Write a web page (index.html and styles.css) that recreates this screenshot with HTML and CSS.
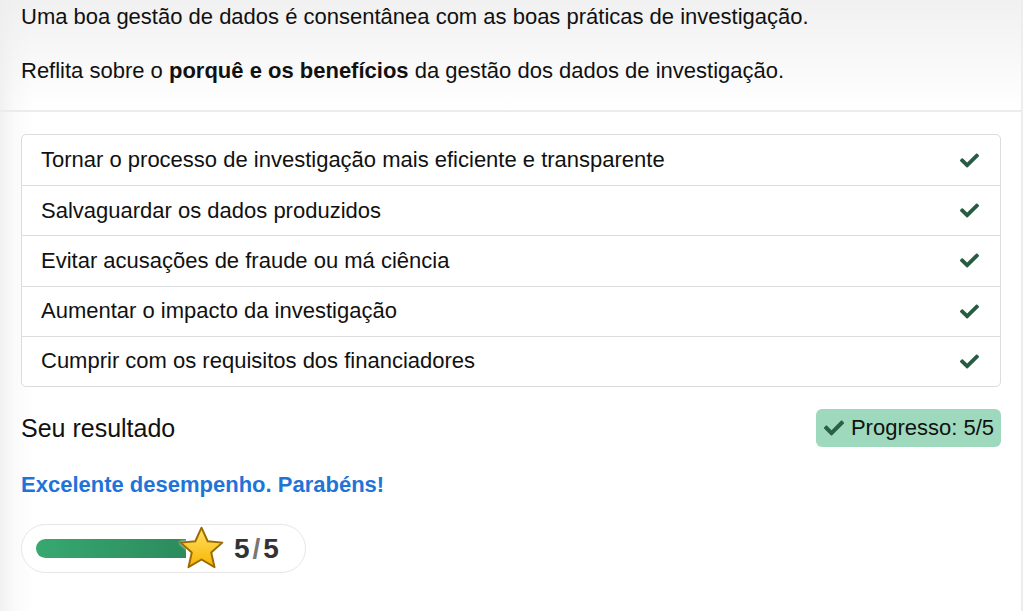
FILE: index.html
```html
<!DOCTYPE html>
<html lang="pt">
<head>
<meta charset="utf-8">
<title>Gestão de dados</title>
<link rel="stylesheet" href="styles.css">
</head>
<body>
<div class="frame">
  <header class="intro">
    <p>Uma boa gestão de dados é consentânea com as boas práticas de investigação.</p>
    <p>Reflita sobre o <strong>porquê e os benefícios</strong> da gestão dos dados de investigação.</p>
  </header>
  <main class="content">
    <ul class="answers">
      <li><span>Tornar o processo de investigação mais eficiente e transparente</span><svg class="check" viewBox="0 0 512 512"><path d="M173.898 439.404l-166.4-166.4c-9.997-9.997-9.997-26.206 0-36.204l36.203-36.204c9.997-9.998 26.207-9.998 36.204 0L192 312.69 432.095 72.596c9.997-9.997 26.207-9.997 36.204 0l36.203 36.204c9.997 9.997 9.997 26.206 0 36.204l-294.4 294.401c-9.998 9.997-26.207 9.997-36.204-.001z"/></svg></li>
      <li><span>Salvaguardar os dados produzidos</span><svg class="check" viewBox="0 0 512 512"><path d="M173.898 439.404l-166.4-166.4c-9.997-9.997-9.997-26.206 0-36.204l36.203-36.204c9.997-9.998 26.207-9.998 36.204 0L192 312.69 432.095 72.596c9.997-9.997 26.207-9.997 36.204 0l36.203 36.204c9.997 9.997 9.997 26.206 0 36.204l-294.4 294.401c-9.998 9.997-26.207 9.997-36.204-.001z"/></svg></li>
      <li><span>Evitar acusações de fraude ou má ciência</span><svg class="check" viewBox="0 0 512 512"><path d="M173.898 439.404l-166.4-166.4c-9.997-9.997-9.997-26.206 0-36.204l36.203-36.204c9.997-9.998 26.207-9.998 36.204 0L192 312.69 432.095 72.596c9.997-9.997 26.207-9.997 36.204 0l36.203 36.204c9.997 9.997 9.997 26.206 0 36.204l-294.4 294.401c-9.998 9.997-26.207 9.997-36.204-.001z"/></svg></li>
      <li><span>Aumentar o impacto da investigação</span><svg class="check" viewBox="0 0 512 512"><path d="M173.898 439.404l-166.4-166.4c-9.997-9.997-9.997-26.206 0-36.204l36.203-36.204c9.997-9.998 26.207-9.998 36.204 0L192 312.69 432.095 72.596c9.997-9.997 26.207-9.997 36.204 0l36.203 36.204c9.997 9.997 9.997 26.206 0 36.204l-294.4 294.401c-9.998 9.997-26.207 9.997-36.204-.001z"/></svg></li>
      <li><span>Cumprir com os requisitos dos financiadores</span><svg class="check" viewBox="0 0 512 512"><path d="M173.898 439.404l-166.4-166.4c-9.997-9.997-9.997-26.206 0-36.204l36.203-36.204c9.997-9.998 26.207-9.998 36.204 0L192 312.69 432.095 72.596c9.997-9.997 26.207-9.997 36.204 0l36.203 36.204c9.997 9.997 9.997 26.206 0 36.204l-294.4 294.401c-9.998 9.997-26.207 9.997-36.204-.001z"/></svg></li>
    </ul>
    <div class="result-head">
      <h2>Seu resultado</h2>
      <div class="badge"><svg class="check" viewBox="0 0 512 512"><path d="M173.898 439.404l-166.4-166.4c-9.997-9.997-9.997-26.206 0-36.204l36.203-36.204c9.997-9.998 26.207-9.998 36.204 0L192 312.69 432.095 72.596c9.997-9.997 26.207-9.997 36.204 0l36.203 36.204c9.997 9.997 9.997 26.206 0 36.204l-294.4 294.401c-9.998 9.997-26.207 9.997-36.204-.001z"/></svg><span>Progresso: 5/5</span></div>
    </div>
    <p class="feedback">Excelente desempenho. Parabéns!</p>
    <div class="score">
      <div class="track">
        <div class="fill"></div>
        <svg class="star" viewBox="0 0 44 44">
          <defs>
            <linearGradient id="sg" x1="0" y1="0" x2="0" y2="1">
              <stop offset="0" stop-color="#ffe066"/>
              <stop offset="1" stop-color="#f7b500"/>
            </linearGradient>
          </defs>
          <polygon points="22,2.5 27.8,15.2 41.5,16.5 31.1,25.7 34.2,39.5 22,32.3 9.8,39.5 12.9,25.7 2.5,16.5 16.2,15.2" fill="url(#sg)" stroke="#9a6a00" stroke-width="1.8" stroke-linejoin="round"/>
        </svg>
      </div>
      <span class="count">5<span class="slash">/</span>5</span>
    </div>
  </main>
</div>
</body>
</html>
```
FILE: styles.css
```css
html, body {
  margin: 0;
  padding: 0;
  background: #fff;
}
body {
  font-family: "Liberation Sans", Arial, sans-serif;
  color: #111;
}
.frame {
  width: 1023px;
  height: 611px;
  box-sizing: border-box;
  border-right: 2px solid #ededed;
  background: linear-gradient(to right, #f1f1f1 0px, #fafafa 14px, #ffffff 34px);
}
.intro {
  padding: 2px 21px 24px;
  border-bottom: 2px solid #ececec;
  background: linear-gradient(to bottom, rgba(238,238,238,0.85) 0%, rgba(255,255,255,0) 100%);
}
.intro p {
  margin: 0 0 24px;
  font-size: 22px;
  line-height: 30px;
}
.intro p:last-child {
  margin-bottom: 0;
}
.intro strong {
  font-weight: 700;
}
.content {
  padding: 22px 21px 0;
}
.answers {
  list-style: none;
  margin: 0;
  padding: 0;
  width: 980px;
  box-sizing: border-box;
  border: 1px solid #dcdcdc;
  border-radius: 5px;
  background: #fff;
}
.answers li {
  display: flex;
  align-items: center;
  justify-content: space-between;
  height: 49.25px;
  padding: 0 21px 0 19px;
  font-size: 22px;
  border-top: 1px solid #dcdcdc;
}
.answers li:first-child {
  border-top: none;
  height: 50px;
}
.check {
  width: 19px;
  height: 19px;
  fill: #275c43;
}
.result-head {
  display: flex;
  align-items: center;
  justify-content: space-between;
  width: 980px;
  margin-top: 22px;
}
.result-head h2 {
  margin: 0;
  font-size: 25px;
  font-weight: 400;
  color: #111;
}
.badge {
  display: flex;
  align-items: center;
  gap: 7px;
  height: 38px;
  padding: 0 7px 0 8px;
  border-radius: 6px;
  background: #9fd9bd;
  font-size: 22px;
  color: #111;
}
.badge .check {
  width: 20px;
  height: 20px;
  fill: #2a6048;
}
.feedback {
  margin: 25px 0 0;
  font-size: 22px;
  font-weight: 700;
  color: #1f74d8;
}
.score {
  display: inline-flex;
  align-items: center;
  gap: 9px;
  margin-top: 26px;
  height: 49px;
  box-sizing: border-box;
  padding: 0 26px 0 14px;
  border: 1px solid #e6e6e6;
  border-radius: 25px;
  background: #fff;
}
.track {
  display: flex;
  align-items: center;
}
.fill {
  width: 150px;
  height: 19px;
  border-radius: 10px 0 0 10px;
  background: linear-gradient(to right, #37a870, #2b8b5d);
}
.star {
  width: 47px;
  height: 47px;
  margin-left: -8px;
  filter: drop-shadow(0 0 1.5px #fff);
}
.count {
  font-size: 28px;
  font-weight: 700;
  color: #333;
}
.slash {
  color: #777;
  padding: 0 3px;
}
```
